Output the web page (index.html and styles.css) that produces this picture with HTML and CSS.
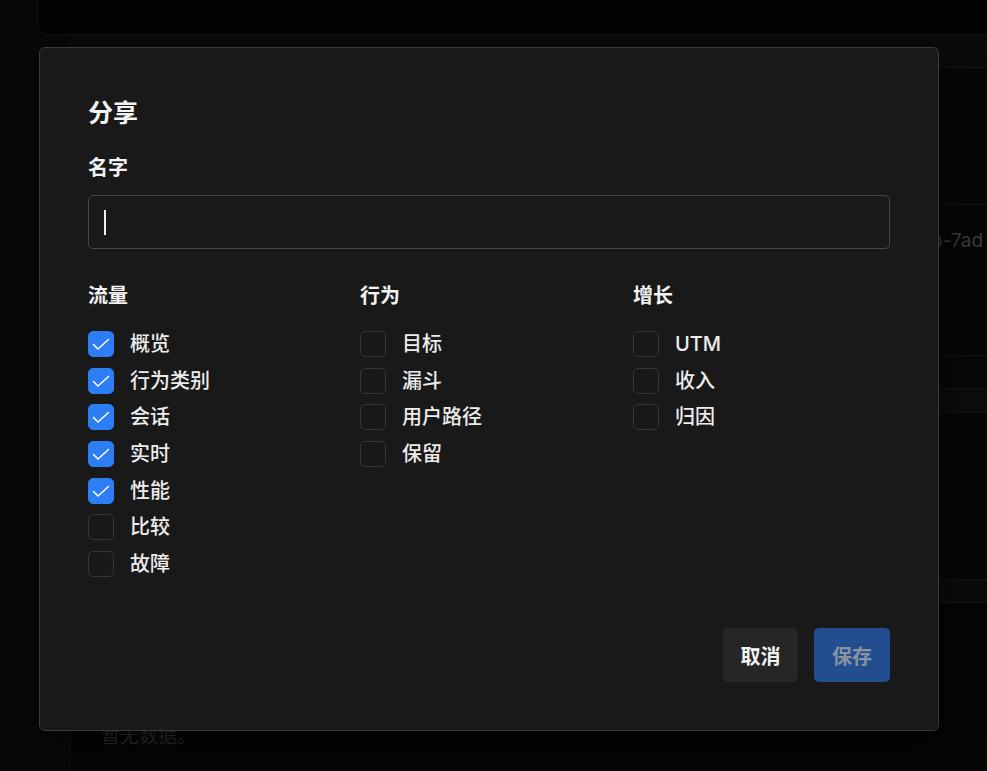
FILE: index.html
```html
<!DOCTYPE html>
<html lang="zh">
<head>
<meta charset="utf-8">
<title>分享</title>
<link rel="stylesheet" href="styles.css">
</head>
<body>
<div class="page">
  <div class="topcard"></div>
  <div class="panel">
    <div class="row strip"></div>
    <div class="row tall"></div>
    <div class="row idrow"><span class="faint-id">b-7ad</span></div>
    <div class="row thin"></div>
    <div class="row thead"></div>
    <div class="row body-area"></div>
    <div class="row thead2"></div>
    <div class="row empty"><span class="empty-text">暂无数据。</span></div>
  </div>
</div>

<div class="modal" role="dialog" aria-label="分享">
  <h2 class="modal-title">分享</h2>
  <label class="field-label">名字</label>
  <div class="text-input"><span class="caret"></span></div>

  <div class="groups">
    <div class="group">
      <div class="group-title">流量</div>
      <ul class="checklist">
        <li class="check-item"><span class="box checked"><svg viewBox="0 0 26 26"><polyline points="5.5,13.5 10,18 20.5,8.5"/></svg></span><span class="item-label">概览</span></li>
        <li class="check-item"><span class="box checked"><svg viewBox="0 0 26 26"><polyline points="5.5,13.5 10,18 20.5,8.5"/></svg></span><span class="item-label">行为类别</span></li>
        <li class="check-item"><span class="box checked"><svg viewBox="0 0 26 26"><polyline points="5.5,13.5 10,18 20.5,8.5"/></svg></span><span class="item-label">会话</span></li>
        <li class="check-item"><span class="box checked"><svg viewBox="0 0 26 26"><polyline points="5.5,13.5 10,18 20.5,8.5"/></svg></span><span class="item-label">实时</span></li>
        <li class="check-item"><span class="box checked"><svg viewBox="0 0 26 26"><polyline points="5.5,13.5 10,18 20.5,8.5"/></svg></span><span class="item-label">性能</span></li>
        <li class="check-item"><span class="box"></span><span class="item-label">比较</span></li>
        <li class="check-item"><span class="box"></span><span class="item-label">故障</span></li>
      </ul>
    </div>
    <div class="group">
      <div class="group-title">行为</div>
      <ul class="checklist">
        <li class="check-item"><span class="box"></span><span class="item-label">目标</span></li>
        <li class="check-item"><span class="box"></span><span class="item-label">漏斗</span></li>
        <li class="check-item"><span class="box"></span><span class="item-label">用户路径</span></li>
        <li class="check-item"><span class="box"></span><span class="item-label">保留</span></li>
      </ul>
    </div>
    <div class="group">
      <div class="group-title">增长</div>
      <ul class="checklist">
        <li class="check-item"><span class="box"></span><span class="item-label">UTM</span></li>
        <li class="check-item"><span class="box"></span><span class="item-label">收入</span></li>
        <li class="check-item"><span class="box"></span><span class="item-label">归因</span></li>
      </ul>
    </div>
  </div>

  <div class="actions">
    <button class="btn btn-cancel">取消</button>
    <button class="btn btn-save">保存</button>
  </div>
</div>
</body>
</html>
```

FILE: styles.css
```css
* { box-sizing: border-box; }

html, body {
  margin: 0;
  padding: 0;
  width: 987px;
  height: 771px;
  overflow: hidden;
  background: #080808;
  font-family: Inter, "Noto Sans CJK SC", "Noto Sans", sans-serif;
  color: #ededed;
}

.page {
  position: relative;
  height: 771px;
}

.topcard {
  margin-left: 37px;
  height: 35px;
  background: #030303;
  border: 1px solid #141414;
  border-top: none;
  border-right: none;
  border-bottom-left-radius: 9px;
}

.panel {
  margin-left: 70px;
  border-left: 1px solid #101010;
  display: flex;
  flex-direction: column;
}

.row {
  border-bottom: 1px solid #151515;
}

.strip {
  height: 33px;
  background: #0b0b0b;
}

.tall {
  height: 137px;
  background: #060606;
}

.idrow {
  height: 151px;
  background: #060606;
  padding-top: 24px;
  padding-left: 860px;
  white-space: nowrap;
}

.faint-id {
  font-size: 19px;
  color: #3b3b3b;
}

.thin {
  height: 33px;
  background: #070707;
}

.thead {
  height: 24px;
  background: #0c0c0c;
}

.body-area {
  height: 167px;
  background: #060606;
}

.thead2 {
  height: 23px;
  background: #0b0b0b;
}

.empty {
  height: 170px;
  border-bottom: none;
  background: #050505;
  padding-top: 118px;
  padding-left: 30px;
}

.empty-text {
  font-size: 19px;
  color: #2c2c2c;
}

/* Modal */
.modal {
  position: absolute;
  left: 39px;
  top: 47px;
  width: 900px;
  height: 684px;
  background: #191919;
  border: 1px solid #3a3a3a;
  border-radius: 6px;
  padding: 49px 48px 48px 48px;
  display: flex;
  flex-direction: column;
  box-shadow: 0 10px 40px rgba(0, 0, 0, 0.6);
}

.modal-title {
  margin: 0;
  font-size: 25px;
  line-height: 32px;
  font-weight: 700;
  color: #f2f2f2;
}

.field-label {
  margin-top: 27px;
  font-size: 20px;
  line-height: 24px;
  font-weight: 700;
  color: #f2f2f2;
}

.text-input {
  margin-top: 15px;
  height: 54px;
  border: 1px solid #464646;
  border-radius: 5px;
  background: #191919;
  padding: 0 15px;
  display: flex;
  align-items: center;
}

.caret {
  width: 2px;
  height: 25px;
  background: #f0f0f0;
}

.groups {
  margin-top: 35px;
  display: grid;
  grid-template-columns: 272px 273px 1fr;
}

.group-title {
  font-size: 20px;
  line-height: 24px;
  font-weight: 700;
  color: #f2f2f2;
}

.checklist {
  list-style: none;
  margin: 23px 0 0 0;
  padding: 0;
  display: flex;
  flex-direction: column;
  gap: 10.67px;
}

.check-item {
  display: flex;
  align-items: center;
  gap: 16px;
  height: 26px;
}

.box {
  width: 26px;
  height: 26px;
  flex: none;
  border: 1px solid #363636;
  border-radius: 5px;
  background: #181818;
  display: flex;
  align-items: center;
  justify-content: center;
}

.box.checked {
  background: #2d7ef5;
  border-color: #2d7ef5;
}

.box svg {
  width: 26px;
  height: 26px;
  flex: none;
  fill: none;
  stroke: #ffffff;
  stroke-width: 1.5;
  stroke-linecap: round;
  stroke-linejoin: round;
}

.item-label {
  font-size: 20px;
  line-height: 26px;
  font-weight: 500;
  color: #ececec;
}

.actions {
  margin-top: auto;
  display: flex;
  justify-content: flex-end;
  gap: 16px;
}

.btn {
  height: 54px;
  border: none;
  border-radius: 5px;
  font-family: inherit;
  font-size: 20px;
  font-weight: 700;
  padding: 0;
  cursor: pointer;
}

.btn-cancel {
  width: 75px;
  background: #262626;
  color: #f2f2f2;
}

.btn-save {
  width: 76px;
  background: #224e90;
  color: #8a93a2;
}
```
